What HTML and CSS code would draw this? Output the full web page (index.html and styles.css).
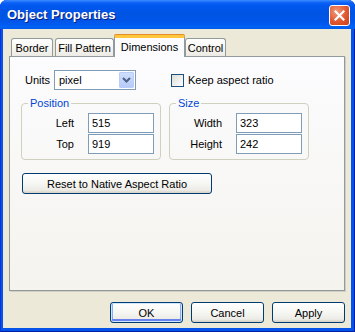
FILE: index.html
```html
<!DOCTYPE html>
<html lang="en">
<head>
    <meta charset="UTF-8">
    <title>Object Properties</title>
    <link rel="stylesheet" href="styles.css">
</head>
<body>

    <div class="window">
        <div class="titlebar">
            <span class="title">Object Properties</span>
            <button class="close" aria-label="Close">
                <svg width="11" height="11" viewBox="0 0 11 11">
                    <path d="M1.5 1.5 L9.5 9.5 M9.5 1.5 L1.5 9.5" stroke="#fff" stroke-width="2.2" stroke-linecap="square"/>
                </svg>
            </button>
        </div>

        <div class="client">
            <div class="tabs">
                <div class="tab tab-border">Border</div>
                <div class="tab tab-fill">Fill Pattern</div>
                <div class="tab tab-dims active">Dimensions</div>
                <div class="tab tab-control">Control</div>
            </div>

            <div class="panel">
                <div class="units-row">
                    <span class="units-label">Units</span>
                    <div class="select">
                        <span class="select-value">pixel</span>
                        <span class="select-drop">
                            <svg width="9" height="6" viewBox="0 0 9 6">
                                <path d="M1 1 L4.5 4.5 L8 1" fill="none" stroke="#4d6185" stroke-width="2"/>
                            </svg>
                        </span>
                    </div>
                    <label class="check">
                        <span class="check-box"></span>
                        <span>Keep aspect ratio</span>
                    </label>
                </div>

                <div class="groups">
                    <fieldset class="group">
                        <legend>Position</legend>
                        <div class="fields">
                            <span class="field-label">Left</span>
                            <div class="input">515</div>
                            <span class="field-label">Top</span>
                            <div class="input">919</div>
                        </div>
                    </fieldset>
                    <fieldset class="group">
                        <legend>Size</legend>
                        <div class="fields">
                            <span class="field-label">Width</span>
                            <div class="input">323</div>
                            <span class="field-label">Height</span>
                            <div class="input">242</div>
                        </div>
                    </fieldset>
                </div>

                <button class="btn reset">Reset to Native Aspect Ratio</button>
            </div>

            <div class="actions">
                <button class="btn default">OK</button>
                <button class="btn">Cancel</button>
                <button class="btn">Apply</button>
            </div>
        </div>
    </div>

</body>
</html>
```

FILE: styles.css
```css
body {
    margin: 0;
    padding: 0;
    font-family: "Liberation Sans", Arial, sans-serif;
    font-size: 11px;
    color: #000;
    background: #fff;
}
.window {
    width: 355px;
    height: 332px;
    box-sizing: border-box;
    background: #0553e8;
    border-radius: 7px 7px 0 0;
    padding: 0 4px 4px 3px;
    display: flex;
    flex-direction: column;
    box-shadow: inset 1px 0 0 #0831d9, inset -1px 0 0 #001ea0, inset 0 -1px 0 #001ea0;
}
.titlebar {
    height: 29px;
    margin: 0 -4px 0 -3px;
    padding: 0 5px 0 7px;
    display: flex;
    align-items: center;
    justify-content: space-between;
    border-radius: 7px 7px 0 0;
    background: linear-gradient(#3a8cff 0, #0a5ef6 3px, #0058ee 6px, #0054e3 14px, #0056ea 22px, #0062f6 27px, #0059ea 29px);
}
.title {
    color: #fff;
    font-weight: bold;
    font-size: 13px;
    text-shadow: 1px 1px 0 #0a1e80;
    padding-bottom: 1px;
}
.close {
    width: 21px;
    height: 21px;
    padding: 0;
    margin-top: 2px;
    border: 1px solid #fff;
    border-radius: 3px;
    background: radial-gradient(circle at 35% 30%, #f09a7c 0, #e2572f 55%, #c8401c 100%);
    display: flex;
    align-items: center;
    justify-content: center;
}
.client {
    flex: 1;
    background: #ece9d8;
    display: flex;
    flex-direction: column;
    padding: 6px 6px 0 6px;
}
.tabs {
    display: flex;
    align-items: flex-end;
    height: 21px;
    padding-left: 2px;
    position: relative;
    z-index: 1;
}
.tab {
    height: 18px;
    box-sizing: border-box;
    border: 1px solid #919b9c;
    border-bottom: none;
    border-radius: 3px 3px 0 0;
    background: linear-gradient(#fff, #f5f4ef 60%, #ebeae4);
    text-align: center;
    line-height: 18px;
    margin-right: 2px;
}
.tab-border { width: 42px; }
.tab-fill { width: 59px; margin-right: 0; }
.tab-dims { width: 71px; margin-right: 0; }
.tab-control { width: 41px; }
.tab.active {
    height: 22px;
    margin-bottom: -1px;
    line-height: 19px;
    background: #fcfcfe;
    border-top: 3px solid #ffc83c;
    box-shadow: 0 -1px 0 #e68b2c;
    border-radius: 2px 2px 0 0;
}
.panel {
    height: 235px;
    box-sizing: border-box;
    border: 1px solid #919b9c;
    box-shadow: 1px 1px 0 #d0cec3;
    background: linear-gradient(#fcfcfe, #f4f3ee);
    padding: 13px 11px 0 11px;
}
.units-row {
    display: flex;
    align-items: center;
    height: 20px;
    padding-left: 4px;
}
.units-label {
    width: 29px;
}
.select {
    width: 82px;
    height: 20px;
    box-sizing: border-box;
    border: 1px solid #7f9db9;
    background: #fff;
    display: flex;
    align-items: center;
    justify-content: space-between;
    padding: 1px;
}
.select-value {
    padding-left: 3px;
}
.select-drop {
    width: 15px;
    height: 16px;
    box-sizing: border-box;
    border: 1px solid #b9cdf8;
    border-radius: 1px;
    background: linear-gradient(#cfdefd, #b6cbf7);
    display: flex;
    align-items: center;
    justify-content: center;
}
.check {
    display: flex;
    align-items: center;
    margin-left: 35px;
    gap: 4px;
}
.check-box {
    width: 13px;
    height: 13px;
    box-sizing: border-box;
    border: 1px solid #1c5180;
    background: linear-gradient(135deg, #dcdcd7, #fff);
}
.groups {
    display: flex;
    gap: 8px;
    margin-top: 7px;
}
.group {
    width: 140px;
    box-sizing: border-box;
    margin: 0;
    padding: 0 0 5px 0;
    border: 1px solid #d0d0bf;
    border-radius: 4px;
}
.group legend {
    color: #0046d5;
    padding: 0 2px;
    margin-left: 6px;
    line-height: 13px;
}
.fields {
    display: grid;
    grid-template-columns: 52px 66px;
    column-gap: 14px;
    row-gap: 1px;
    align-items: center;
    margin-top: 3px;
}
.field-label {
    text-align: right;
}
.input {
    height: 20px;
    box-sizing: border-box;
    border: 1px solid #7f9db9;
    background: #fff;
    line-height: 18px;
    padding-left: 3px;
}
.btn {
    font-family: "Liberation Sans", Arial, sans-serif;
    font-size: 11px;
    color: #000;
    height: 21px;
    padding: 0;
    border: 1px solid #003c74;
    border-radius: 3px;
    background: linear-gradient(#fff, #f6f6f3 50%, #ecebe6 85%, #d6d0c5);
}
.reset {
    display: block;
    width: 190px;
    margin: 13px 0 0 1px;
}
.actions {
    display: flex;
    justify-content: flex-end;
    gap: 8px;
    margin-top: 11px;
}
.actions .btn {
    width: 73px;
}
.btn.default {
    box-shadow: inset 0 0 0 1px #cee7ff, inset 0 -2px 0 1px #6982ee, inset 2px 0 0 0 #89adf4, inset -2px 0 0 0 #89adf4;
}
```
